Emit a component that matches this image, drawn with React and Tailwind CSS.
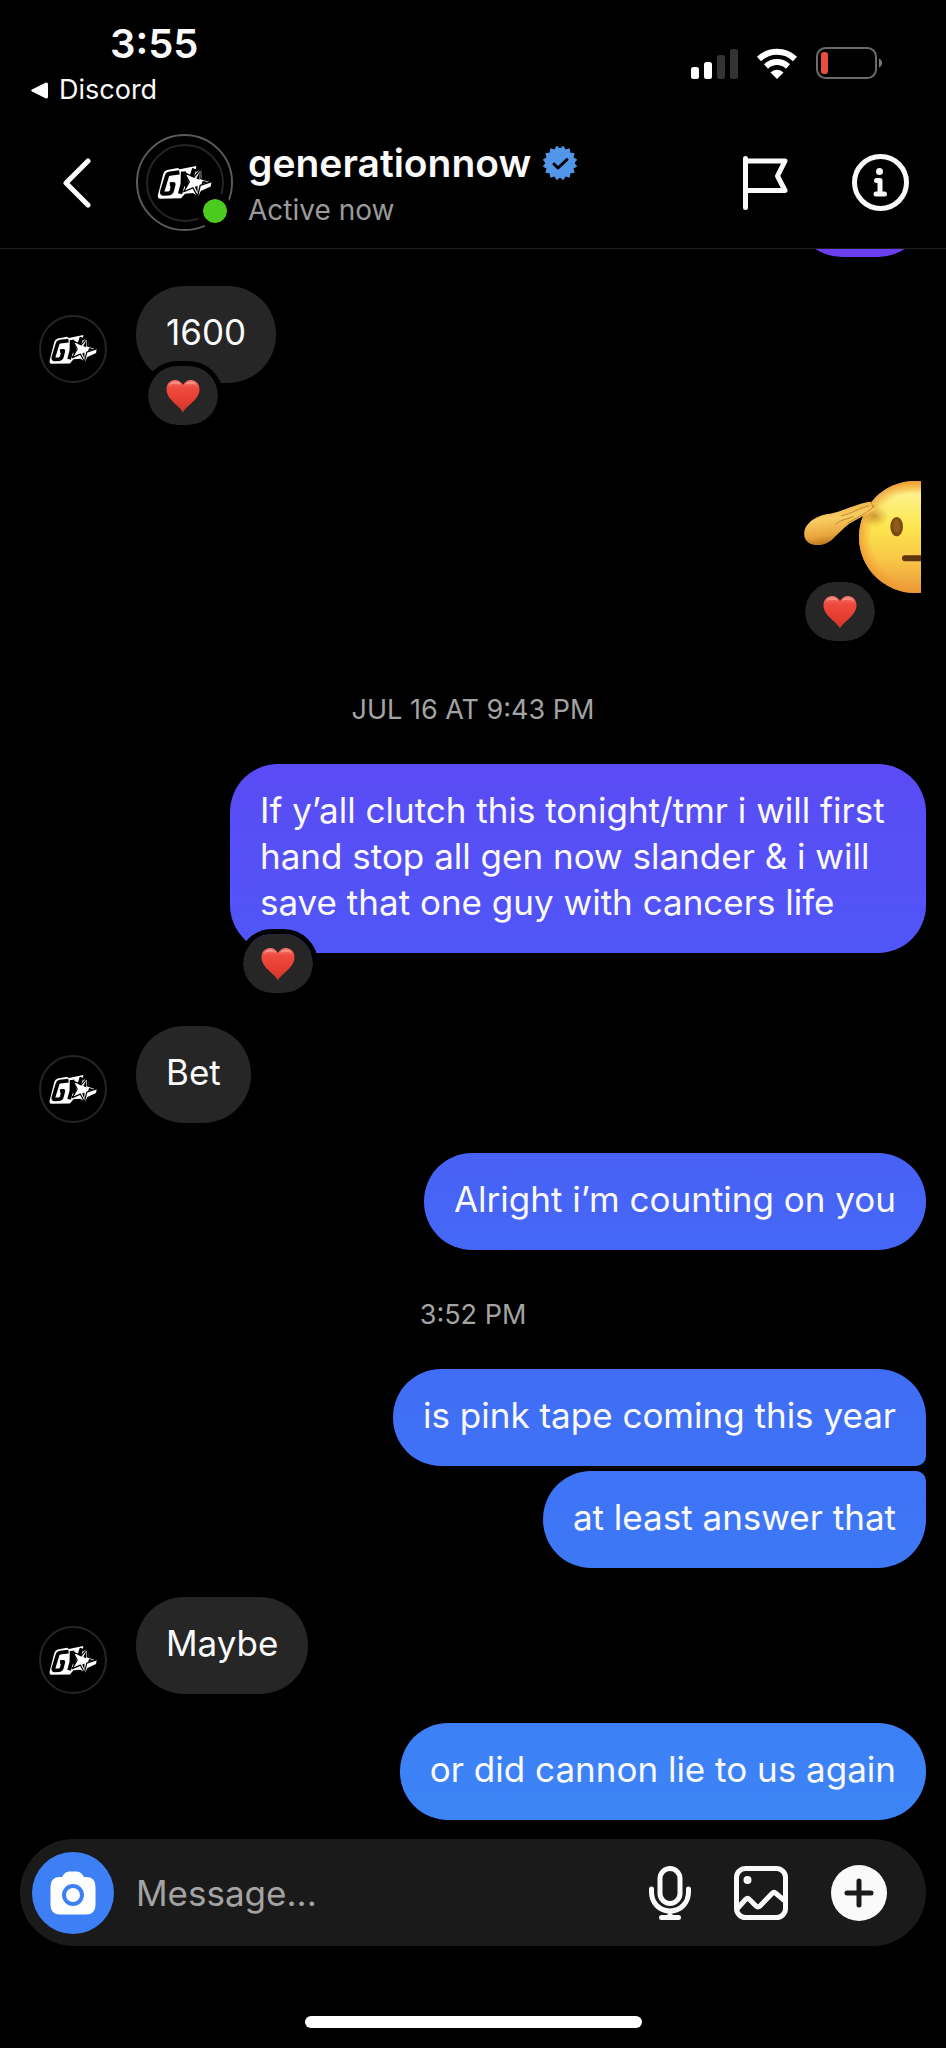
const MESSAGES = [
  { id: 1, from: "them", text: "1600", liked: true, gap: "mt-[29px]" },
  { id: 2, from: "me", sticker: true, liked: true, gap: "mt-[98px]" },
  { id: 3, time: "JUL 16 AT 9:43 PM", gap: "mt-[99px]" },
  {
    id: 4,
    from: "me",
    text: "If y’all clutch this tonight/tmr i will first hand stop all gen now slander & i will save that one guy with cancers life",
    liked: true,
    gap: "mt-9",
    shape: "rounded-[48px] from-[#5a4bf5] to-[#5056f8]",
  },
  { id: 5, from: "them", text: "Bet", gap: "mt-[73px]" },
  {
    id: 6,
    from: "me",
    text: "Alright i’m counting on you",
    gap: "mt-[30px]",
    shape: "rounded-[48px] from-[#4861f5] to-[#4568f8]",
  },
  { id: 7, time: "3:52 PM", gap: "mt-[47px]" },
  {
    id: 8,
    from: "me",
    text: "is pink tape coming this year",
    gap: "mt-9",
    shape: "rounded-[48px] rounded-br-[10px] from-[#406df5] to-[#3f72f6]",
  },
  {
    id: 9,
    from: "me",
    text: "at least answer that",
    gap: "mt-[5px]",
    shape: "rounded-[48px] rounded-tr-[10px] from-[#3e73f6] to-[#3d78f6]",
  },
  { id: 10, from: "them", text: "Maybe", gap: "mt-[29px]" },
  {
    id: 11,
    from: "me",
    text: "or did cannon lie to us again",
    gap: "mt-[29px]",
    shape: "rounded-[48px] from-[#3d80f6] to-[#3c84f6]",
  },
];

const BADGE_POINTS = Array.from({ length: 32 }, (_, i) => {
  const r = i % 2 ? 14 : 17;
  const a = ((i + 1) * Math.PI) / 16;
  return `${(17 + r * Math.sin(a)).toFixed(2)},${(17 - r * Math.cos(a)).toFixed(2)}`;
}).join(" ");

function CrewLogo({ className }) {
  return (
    <svg viewBox="0 0 165 100" className={className} aria-hidden="true">
      <path
        d="M30 12 L62 6 L68 10 L118 0 L116 20 L134 8 L135 38 L164 48 L162 62 L132 76 L124 92 L108 82 L84 84 L72 98 L8 99 Q0 98 2 88 L18 24 Q21 14 30 12 Z"
        fill="#fff"
      />
      {/* monogram bands */}
      <g fill="none" stroke="#000" strokeWidth="13" strokeLinejoin="round">
        <path d="M67 19 L38 23 Q31 24 29 31 L15 77 Q13 84 20 84 L35 83 Q42 82 44 75 L49 55 L38 56" />
        <path d="M78 17 L77 55 L69 84 M80 17 L92 72 M112 8 L104 34" />
      </g>
      <path
        d="M133 8 L132 38 L163 48 L130 59 L122 92 L108 66 L80 78 L97 48 L82 20 L111 34 Z"
        fill="#fff"
        stroke="#000"
        strokeWidth="4"
        strokeLinejoin="round"
      />
      <path d="M129 17 L118 38 L128 42 Z M138 45 L154 49 L134 55 Z M122 82 L114 64 L122 60 Z" fill="#000" />
    </svg>
  );
}

function Avatar() {
  return (
    <div className="flex size-[68px] shrink-0 items-center justify-center rounded-full border-2 border-[#252525]">
      <CrewLogo className="h-[29px] w-[48px]" />
    </div>
  );
}

function Heart() {
  return (
    <svg viewBox="0 0 34 34" className="size-[34px]" role="img" aria-label="Heart">
      <defs>
        <linearGradient id="heart" x1="0" y1="0" x2="0" y2="1">
          <stop offset="0" stopColor="#f9776b" />
          <stop offset="0.25" stopColor="#ee4b3e" />
          <stop offset="0.65" stopColor="#e53e30" />
          <stop offset="1" stopColor="#cc342d" />
        </linearGradient>
      </defs>
      <path
        d="M17 33.5 C14 27 0.5 20.500 0.500 10.500 C0.500 4.500 4.500 1 9 1 C12.500 1 15.500 3 17 6 C18.500 3 21.500 1 25 1 C29.500 1 33.500 4.500 33.500 10.500 C33.500 20.500 20 27 17 33.500 Z"
        fill="url(#heart)"
      />
      <path d="M3 7 C5 2 12 1 15 6 C11 4 6 4 3 7 Z M19 6 C22 1 29 2 31 7 C28 4 23 4 19 6 Z" fill="#ffc4bd" opacity="0.6" />
    </svg>
  );
}

function Reaction({ className }) {
  return (
    <button
      type="button"
      className={`absolute box-content flex h-[59px] w-[70px] items-center justify-center rounded-[36px] border-[5px] border-black bg-[#262626] bg-clip-padding ${className}`}
    >
      <Heart />
    </button>
  );
}

function SaluteSticker() {
  return (
    <svg viewBox="0 0 351 336" className="h-[112px] w-[117px]" role="img" aria-label="Saluting face">
      <defs>
        <linearGradient id="face" x1="0" y1="0" x2="0" y2="1">
          <stop offset="0" stopColor="#f6c043" />
          <stop offset="0.12" stopColor="#fdf08a" />
          <stop offset="0.4" stopColor="#fde74f" />
          <stop offset="0.7" stopColor="#f9c646" />
          <stop offset="1" stopColor="#eb9a3c" />
        </linearGradient>
        <radialGradient id="edge" cx="0.5" cy="0.5" r="0.5">
          <stop offset="0.78" stopColor="#f0a030" stopOpacity="0" />
          <stop offset="1" stopColor="#ea9632" stopOpacity="0.8" />
        </radialGradient>
        <radialGradient id="shade" cx="0.5" cy="0.5" r="0.5">
          <stop offset="0" stopColor="#a86418" stopOpacity="0.6" />
          <stop offset="1" stopColor="#d98a2c" stopOpacity="0" />
        </radialGradient>
        <linearGradient id="hand" x1="0" y1="0" x2="0.25" y2="1">
          <stop offset="0" stopColor="#e9a63b" />
          <stop offset="0.45" stopColor="#f8cd62" />
          <stop offset="0.8" stopColor="#e8a53c" />
          <stop offset="1" stopColor="#b87420" />
        </linearGradient>
      </defs>
      <circle cx="333" cy="168" r="168" fill="url(#face)" />
      <circle cx="333" cy="168" r="168" fill="url(#edge)" />
      <ellipse cx="212" cy="106" rx="42" ry="34" fill="url(#shade)" />
      <ellipse cx="278" cy="137" rx="19" ry="29" fill="#7a4a12" />
      <ellipse cx="278" cy="134" rx="11" ry="19" fill="#8f5b1c" />
      <rect x="294" y="223" width="80" height="18" rx="9" fill="#5f3510" />
      <path
        d="M1 154 C4 124 40 102 78 98 C108 94 150 72 188 64 C202 60 214 62 220 69 C225 79 216 88 203 91 L150 120 C128 130 112 150 92 168 C74 190 48 195 28 191 C8 186 -1 172 1 154 Z"
        fill="url(#hand)"
      />
      <path
        d="M95 129 C114 114 124 118 148 106 M112 104 C145 98 158 84 194 74 M132 126 C150 112 192 98 212 74 M202 64 L208 80"
        fill="none"
        stroke="#c08730"
        strokeWidth="3"
        strokeLinecap="round"
      />
    </svg>
  );
}

function Message({ message }) {
  const { from, text, time, sticker, liked, gap, shape } = message;

  if (time) {
    return <p className={`${gap} text-center text-[27px] leading-9 text-[#a3a3a3]`}>{time}</p>;
  }

  if (sticker) {
    return (
      <div className={`${gap} relative mr-[25px] self-end`}>
        <SaluteSticker />
        <Reaction className="-bottom-[53px] -left-1" />
      </div>
    );
  }

  if (from === "me") {
    return (
      <div className={`${gap} ${shape} relative mr-5 max-w-[696px] self-end bg-linear-to-b px-[30px] pt-[23px] pb-7`}>
        <p>{text}</p>
        {liked && <Reaction className="-bottom-[45px] left-2" />}
      </div>
    );
  }

  return (
    <div className={`${gap} flex items-end gap-[29px] pl-[39px]`}>
      <Avatar />
      <div className="relative rounded-[48px] bg-[#262626] px-[30px] pt-[23px] pb-7">
        <p>{text}</p>
        {liked && <Reaction className="-bottom-[47px] left-[7px]" />}
      </div>
    </div>
  );
}

function StatusBar() {
  return (
    <div className="flex h-[117px] justify-between pr-[63px]">
      <div>
        <p className="mt-5 pl-[110px] text-[40px] leading-[48px] font-semibold">3:55</p>
        <a href="#discord" className="mt-1 flex items-center gap-[11px] pl-[31px] text-[27px] leading-9">
          <svg viewBox="0 0 17 17" className="size-[17px]" aria-hidden="true">
            <path d="M1 7.500 L14.500 0.700 Q17 0 17 2.500 V14.500 Q17 17 14.500 16.300 L1 9.500 Q-0.500 8.500 1 7.500 Z" fill="#fff" />
          </svg>
          Discord
        </a>
      </div>
      <div className="mt-[47px] flex h-8 items-center gap-[18px]">
        <svg viewBox="0 0 47 31" className="h-[31px] w-[47px]" aria-label="Signal">
          <rect x="0" y="19" width="8" height="12" rx="2.500" fill="#fff" />
          <rect x="13" y="14" width="8" height="17" rx="2.500" fill="#fff" />
          <rect x="26" y="7" width="8" height="24" rx="2.500" fill="#333" />
          <rect x="39" y="1" width="8" height="30" rx="2.500" fill="#333" />
        </svg>
        <svg viewBox="0 0 42 31" className="h-[31px] w-[42px]" aria-label="Wi-Fi">
          <path d="M3 11 A26 26 0 0 1 39 11" fill="none" stroke="#fff" strokeWidth="6" />
          <path d="M10 18.500 A16 16 0 0 1 32 18.500" fill="none" stroke="#fff" strokeWidth="6" />
          <path d="M21 31 L14.500 24.500 A9 9 0 0 1 27.500 24.500 Z" fill="#fff" />
        </svg>
        <svg viewBox="0 0 67 32" className="h-8 w-[67px]" aria-label="Battery low">
          <rect x="1" y="1" width="59" height="30" rx="8.500" fill="none" stroke="#6b6b6b" strokeWidth="2" />
          <rect x="5" y="5" width="7" height="22" rx="3" fill="#ea4d3f" />
          <path d="M63 11.500 Q66 13 66 16 Q66 19 63 20.500 Z" fill="#7a7a7a" />
        </svg>
      </div>
    </div>
  );
}

function ChatHeader() {
  return (
    <div className="flex h-[131px] items-center pr-[37px] pl-[62px]">
      <button type="button" aria-label="Back">
        <svg viewBox="0 0 30 50" className="h-[50px] w-[30px]">
          <path d="M26 3 L4 25 L26 47" fill="none" stroke="#fff" strokeWidth="5" strokeLinecap="round" strokeLinejoin="round" />
        </svg>
      </button>
      <div className="relative ml-11 flex size-[97px] shrink-0 items-center justify-center rounded-full border-2 border-[#5a5a5a]">
        <div className="flex size-[78px] items-center justify-center rounded-full border-2 border-[#252525]">
          <CrewLogo className="h-[33px] w-[55px]" />
        </div>
        <span className="absolute -right-[2px] bottom-0 box-content size-6 rounded-full border-[6px] border-black bg-[#4bcb1d] bg-clip-padding" />
      </div>
      <div className="ml-[15px] pt-1">
        <h1 className="flex items-center gap-3 text-[39px] leading-[46px] font-semibold">
          generationnow
          <svg viewBox="0 0 34 34" className="size-[34px]" role="img" aria-label="Verified">
            <polygon points={BADGE_POINTS} fill="#5296ea" stroke="#5296ea" strokeWidth="1" strokeLinejoin="round" />
            <path d="M11 18 L15 22 L24 13.500" fill="none" stroke="#000" strokeWidth="3" strokeLinecap="round" strokeLinejoin="round" />
          </svg>
        </h1>
        <p className="mt-1 text-[28px] leading-10 text-[#9a9a9a]">Active now</p>
      </div>
      <div className="ml-auto flex items-center gap-16">
        <button type="button" aria-label="Label chat">
          <svg viewBox="0 0 45 54" className="h-[54px] w-[45px]">
            <path
              d="M2.500 2.500 V51.500 M2.500 5 H42 L34.500 20 L42 34.500 H2.500"
              fill="none"
              stroke="#fafafa"
              strokeWidth="5"
              strokeLinecap="round"
              strokeLinejoin="round"
            />
          </svg>
        </button>
        <button type="button" aria-label="Chat details">
          <svg viewBox="0 0 57 57" className="size-[57px]">
            <circle cx="28.500" cy="28.500" r="26" fill="none" stroke="#fafafa" strokeWidth="5" />
            <circle cx="27.500" cy="17.500" r="3.500" fill="#fafafa" />
            <path d="M24.500 26.500 H28 V40 M24 40 H32.500" fill="none" stroke="#fafafa" strokeWidth="5" strokeLinecap="round" strokeLinejoin="round" />
          </svg>
        </button>
      </div>
    </div>
  );
}

function Composer() {
  return (
    <form className="mx-5 mt-[19px] flex h-[107px] items-center rounded-full bg-[#1a1a1a] pr-[39px] pl-3">
      <button type="button" aria-label="Camera" className="flex size-[82px] shrink-0 items-center justify-center rounded-full bg-[#3d80f6]">
        <svg viewBox="0 0 46 44" className="h-11 w-[46px]">
          <path
            d="M12 6 L14 3 Q16 0.500 19 0.500 H27 Q30 0.500 32 3 L34 6 H36 Q45.500 6 45.500 15.500 V34 Q45.500 43.500 36 43.500 H10 Q0.500 43.500 0.500 34 V15.500 Q0.500 6 10 6 Z"
            fill="#fff"
          />
          <circle cx="23" cy="24" r="9" fill="#fff" stroke="#3d80f6" strokeWidth="4" />
        </svg>
      </button>
      <input
        type="text"
        aria-label="Message"
        placeholder="Message..."
        className="ml-[22px] min-w-0 flex-1 bg-transparent outline-none placeholder:text-[#a3a3a3]"
      />
      <div className="flex items-center gap-[43px]">
        <button type="button" aria-label="Voice message">
          <svg viewBox="0 0 42 54" className="h-[54px] w-[42px]" fill="none" stroke="#fafafa" strokeWidth="5" strokeLinecap="round">
            <rect x="11" y="2.500" width="20" height="35" rx="10" />
            <path d="M2.500 23 V26 C2.500 37 10.500 45 21 45 C31.500 45 39.500 37 39.500 26 V23 M21 45 V51 M12.500 51.500 H29.500" />
          </svg>
        </button>
        <button type="button" aria-label="Photo library">
          <svg viewBox="0 0 54 54" className="size-[54px]" fill="none" stroke="#fafafa" strokeWidth="5" strokeLinejoin="round">
            <rect x="2.500" y="2.500" width="49" height="49" rx="9" />
            <circle cx="13.500" cy="14" r="4" fill="#fafafa" stroke="none" />
            <path d="M3 43 L11.500 33.500 Q13.500 31.500 15.500 33.500 L22 40 Q24 42 26 40 L38 27.500 Q40 25.500 42 27.500 L51 35" />
          </svg>
        </button>
        <button type="button" aria-label="More">
          <svg viewBox="0 0 56 56" className="size-14">
            <circle cx="28" cy="28" r="28" fill="#fafafa" />
            <path d="M28 16 V40 M16 28 H40" stroke="#1a1a1a" strokeWidth="5" strokeLinecap="round" />
          </svg>
        </button>
      </div>
    </form>
  );
}

export default function App() {
  return (
    <div className="flex min-h-screen flex-col bg-black font-['Inter','Liberation_Sans',sans-serif] text-[35px] leading-[46px] text-[#fafafa]">
      <header className="border-b border-[#1f1f1f]">
        <StatusBar />
        <ChatHeader />
      </header>

      <main className="flex flex-col overflow-hidden">
        {/* tail of the message scrolled under the header */}
        <div className="-mt-[89px] mr-5 h-[97px] w-[132px] self-end rounded-[48px] bg-[#6b3ff0]" />
        {MESSAGES.map((message) => (
          <Message key={message.id} message={message} />
        ))}
      </main>

      <footer>
        <Composer />
        <div className="mx-auto mt-[70px] mb-[19px] h-3 w-[337px] rounded-full bg-white" />
      </footer>
    </div>
  );
}
